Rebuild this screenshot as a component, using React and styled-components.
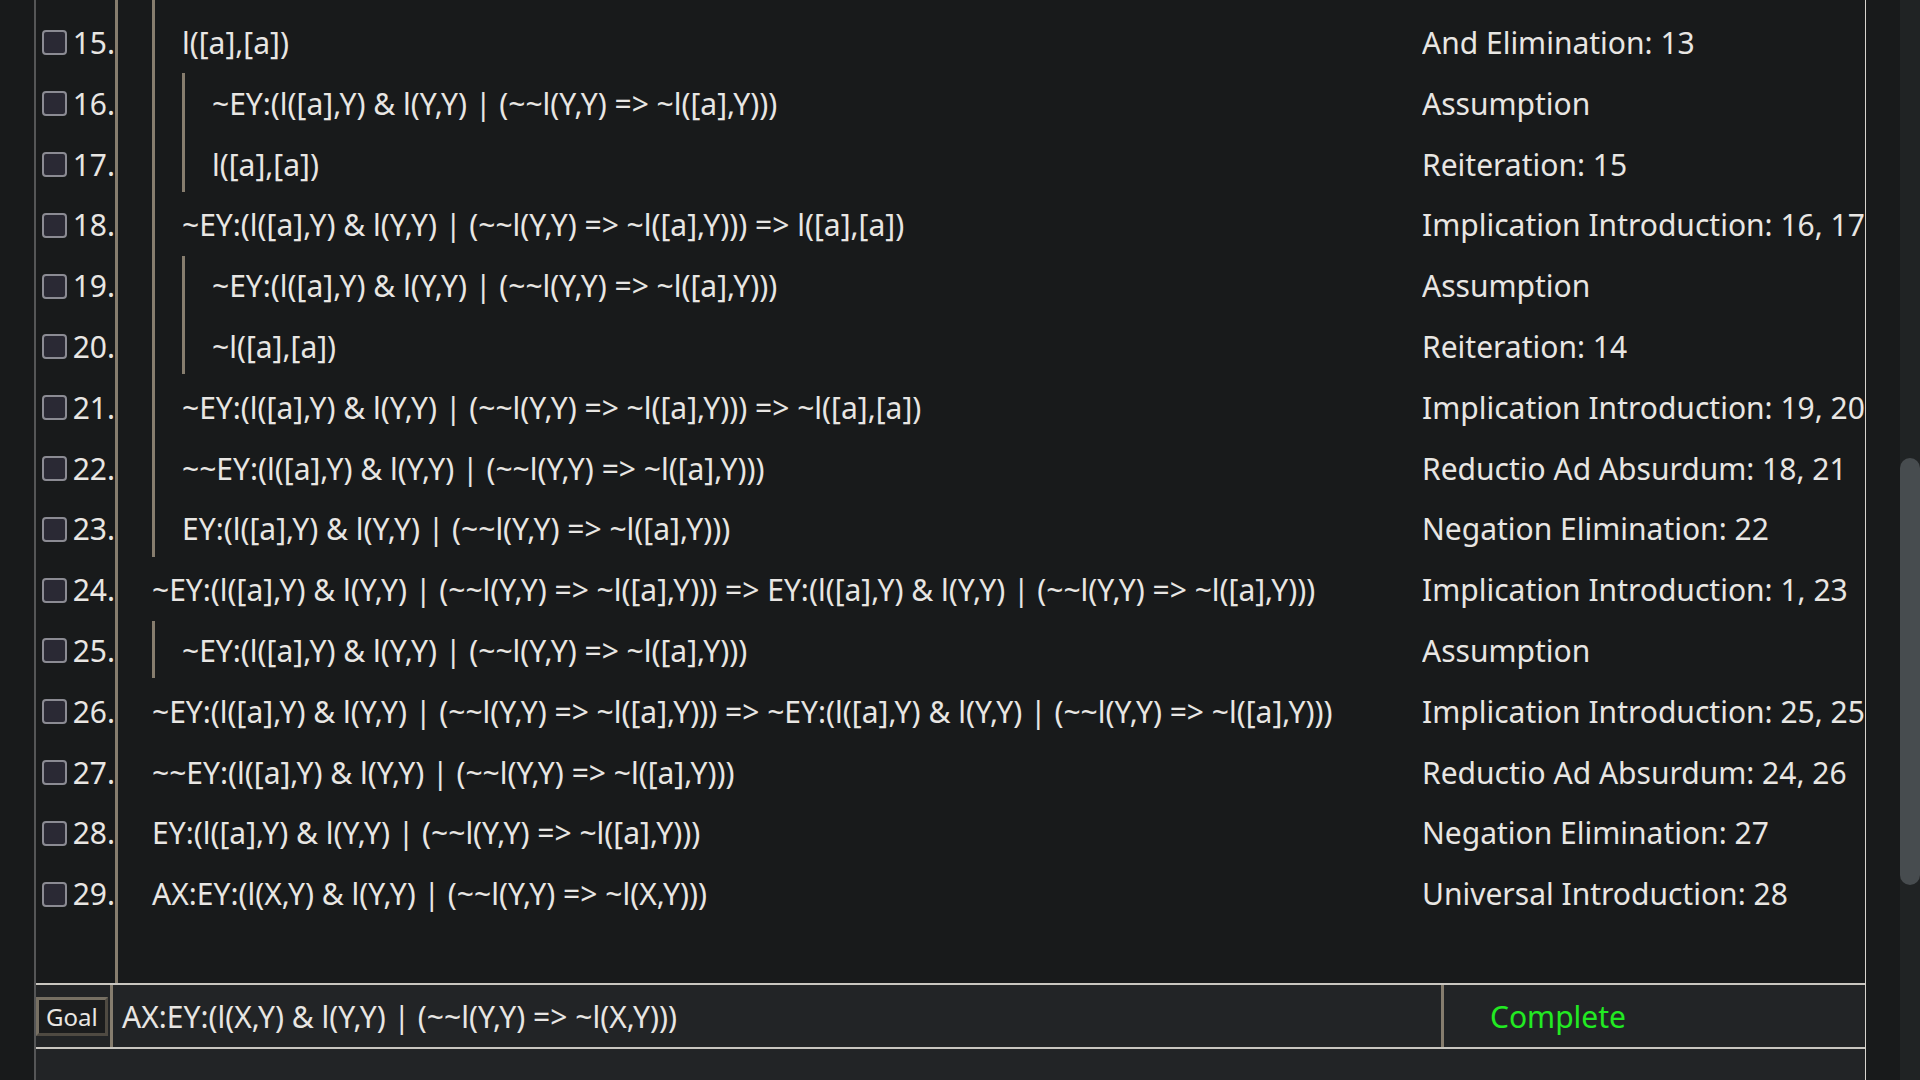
import React from "react";
import styled, { createGlobalStyle } from "styled-components";

const Global = createGlobalStyle`
  html, body { margin: 0; padding: 0; background: #181a1b; overflow: hidden; }
  body { font-family: "Noto Sans", "Open Sans", sans-serif; color: #e8e6e3; }
  * { box-sizing: border-box; }
`;

const Page = styled.div`
  display: flex;
  width: 1920px;
  height: 1080px;
  background: #181a1b;
`;

const Gutter = styled.div`
  width: ${(p) => p.$w}px;
  flex: none;
`;

const Panel = styled.div`
  width: 1832px;
  flex: none;
  display: flex;
  flex-direction: column;
  border-left: 2px solid #555657;
  border-right: 1px solid #d6d3cd;
  background: #181a1b;
`;

const ProofList = styled.div`
  height: 983px;
  flex: none;
  overflow: hidden;
  display: flex;
  flex-direction: column;
`;

const Row = styled.div`
  display: flex;
  height: ${(p) => p.$h || 60.8}px;
  flex: ${(p) => (p.$grow ? 1 : "none")};
  font-size: 30px;
  line-height: 1;
  white-space: nowrap;
`;

const NumCell = styled.div`
  width: 82px;
  flex: none;
  display: flex;
  align-items: center;
  justify-content: space-between;
  padding: 0 0 0 6px;
  border-right: 3px solid #867d6e;
`;

const Check = styled.span`
  width: 25px;
  height: 25px;
  border: 2px solid #8b8b93;
  border-radius: 4px;
  background: #2a2934;
  flex: none;
`;

const Num = styled.span`
  line-height: 1;
`;

const FormulaCell = styled.div`
  width: 1304px;
  flex: none;
  display: flex;
  align-items: stretch;
  padding-left: 34px;
  overflow: hidden;
`;

const Bar = styled.span`
  width: 3px;
  flex: none;
  margin-right: 27px;
  background: #867d6e;
  margin-bottom: ${(p) => (p.$end ? 3 : 0)}px;
`;

const Text = styled.span`
  display: flex;
  align-items: center;
`;

const JustCell = styled.div`
  flex: 1;
  min-width: 0;
  display: flex;
  align-items: center;
  overflow: hidden;
`;

const GoalRow = styled.div`
  height: 66px;
  flex: none;
  display: flex;
  align-items: stretch;
  background: #222426;
  border-top: 2px solid #c9c6c0;
  border-bottom: 2px solid #c9c6c0;
  font-size: 30px;
  white-space: nowrap;
`;

const GoalLabelCell = styled.div`
  width: 77px;
  flex: none;
  display: flex;
  align-items: center;
  border-right: 3px solid #867d6e;
`;

const GoalButton = styled.span`
  display: flex;
  align-items: center;
  height: 39px;
  width: 72px;
  padding-left: 7px;
  font-size: 24px;
  background: #1b1c1d;
  border: 3px solid;
  border-color: #777063 #4f4a42 #4f4a42 #777063;
`;

const GoalFormula = styled.div`
  width: 1331px;
  flex: none;
  display: flex;
  align-items: center;
  padding-left: 9px;
  border-right: 3px solid #867d6e;
`;

const Status = styled.div`
  flex: 1;
  display: flex;
  align-items: center;
  padding-left: 46px;
  color: #22ea22;
`;

const Bottom = styled.div`
  flex: 1;
  background: #222426;
`;

const Track = styled.div`
  width: 20px;
  flex: none;
  background: #202324;
  display: flex;
  flex-direction: column;
  padding-top: 458px;
`;

const Thumb = styled.div`
  height: 427px;
  width: 20px;
  border-radius: 10px;
  background: #474c4f;
`;

const EY = "EY:(l([a],Y) & l(Y,Y) | (~~l(Y,Y) => ~l([a],Y)))";

const rows = [
  { n: 15, lv: [1], f: "l([a],[a])", j: "And Elimination: 13" },
  { n: 16, lv: [1, 2], f: "~" + EY, j: "Assumption" },
  { n: 17, lv: [1, 2], end: 2, f: "l([a],[a])", j: "Reiteration: 15" },
  { n: 18, lv: [1], f: "~" + EY + " => l([a],[a])", j: "Implication Introduction: 16, 17" },
  { n: 19, lv: [1, 2], f: "~" + EY, j: "Assumption" },
  { n: 20, lv: [1, 2], end: 2, f: "~l([a],[a])", j: "Reiteration: 14" },
  { n: 21, lv: [1], f: "~" + EY + " => ~l([a],[a])", j: "Implication Introduction: 19, 20" },
  { n: 22, lv: [1], f: "~~" + EY, j: "Reductio Ad Absurdum: 18, 21" },
  { n: 23, lv: [1], end: 1, f: EY, j: "Negation Elimination: 22" },
  { n: 24, lv: [], f: "~" + EY + " => " + EY, j: "Implication Introduction: 1, 23" },
  { n: 25, lv: [1], end: 1, f: "~" + EY, j: "Assumption" },
  { n: 26, lv: [], f: "~" + EY + " => ~" + EY, j: "Implication Introduction: 25, 25" },
  { n: 27, lv: [], f: "~~" + EY, j: "Reductio Ad Absurdum: 24, 26" },
  { n: 28, lv: [], f: EY, j: "Negation Elimination: 27" },
  { n: 29, lv: [], f: "AX:EY:(l(X,Y) & l(Y,Y) | (~~l(Y,Y) => ~l(X,Y)))", j: "Universal Introduction: 28" },
];

export default function App() {
  return (
    <>
      <Global />
      <Page>
        <Gutter $w={34} />
        <Panel>
          <ProofList>
            {/* tail of the row scrolled above the view: only its rules show */}
            <Row $h={12.6}>
              <NumCell />
              <FormulaCell>
                <Bar />
              </FormulaCell>
            </Row>
            {rows.map((r) => (
              <Row key={r.n}>
                <NumCell>
                  <Check />
                  <Num>{r.n}.</Num>
                </NumCell>
                <FormulaCell>
                  {r.lv.map((l) => (
                    <Bar key={l} $end={r.end === l} />
                  ))}
                  <Text>{r.f}</Text>
                </FormulaCell>
                <JustCell>{r.j}</JustCell>
              </Row>
            ))}
            <Row $grow>
              <NumCell />
            </Row>
          </ProofList>
          <GoalRow>
            <GoalLabelCell>
              <GoalButton>Goal</GoalButton>
            </GoalLabelCell>
            <GoalFormula>AX:EY:(l(X,Y) &amp; l(Y,Y) | (~~l(Y,Y) =&gt; ~l(X,Y)))</GoalFormula>
            <Status>Complete</Status>
          </GoalRow>
          <Bottom />
        </Panel>
        <Gutter $w={34} />
        <Track>
          <Thumb />
        </Track>
      </Page>
    </>
  );
}
